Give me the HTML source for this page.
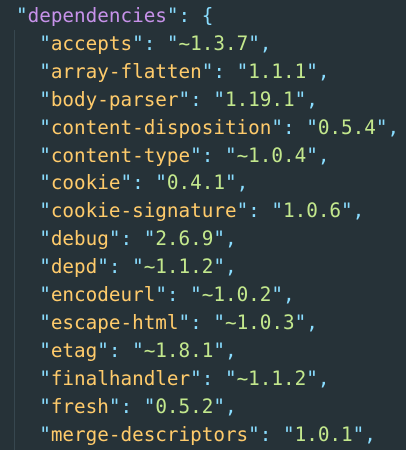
<!DOCTYPE html>
<html><head><style>
html,body{margin:0;padding:0;background:#263238;width:406px;height:439px;overflow:hidden}
pre{margin:0;padding:2px 0 0 16px;font-family:"DejaVu Sans Mono","Liberation Mono",monospace;font-size:19.3px;line-height:27.9px;color:#89DDFF;position:relative}
.g{position:absolute;left:14px;top:30px;width:1px;height:420px;background:#37474f}
.p{color:#C792EA}.k{color:#FFCB6B}.s{color:#C3E88D}
</style></head><body>
<div class="g"></div>
<pre>"<span class="p">dependencies</span>": {
  "<span class="k">accepts</span>": "<span class="s">~1.3.7</span>",
  "<span class="k">array-flatten</span>": "<span class="s">1.1.1</span>",
  "<span class="k">body-parser</span>": "<span class="s">1.19.1</span>",
  "<span class="k">content-disposition</span>": "<span class="s">0.5.4</span>",
  "<span class="k">content-type</span>": "<span class="s">~1.0.4</span>",
  "<span class="k">cookie</span>": "<span class="s">0.4.1</span>",
  "<span class="k">cookie-signature</span>": "<span class="s">1.0.6</span>",
  "<span class="k">debug</span>": "<span class="s">2.6.9</span>",
  "<span class="k">depd</span>": "<span class="s">~1.1.2</span>",
  "<span class="k">encodeurl</span>": "<span class="s">~1.0.2</span>",
  "<span class="k">escape-html</span>": "<span class="s">~1.0.3</span>",
  "<span class="k">etag</span>": "<span class="s">~1.8.1</span>",
  "<span class="k">finalhandler</span>": "<span class="s">~1.1.2</span>",
  "<span class="k">fresh</span>": "<span class="s">0.5.2</span>",
  "<span class="k">merge-descriptors</span>": "<span class="s">1.0.1</span>",
</pre>
</body></html>
